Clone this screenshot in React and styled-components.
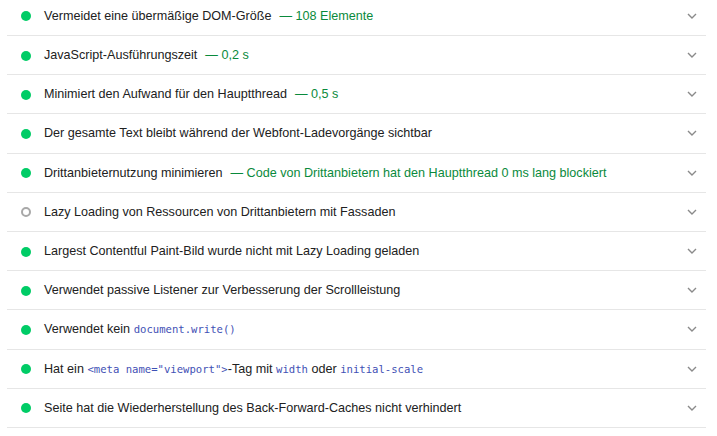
import styled, { createGlobalStyle } from "styled-components";

const GlobalStyle = createGlobalStyle`
  html, body {
    margin: 0;
    padding: 0;
    background: #fff;
    overflow: hidden;
  }
  body {
    font-family: "Liberation Sans", Arial, sans-serif;
    font-size: 12.6px;
    color: #212121;
  }
`;

const Page = styled.div`
  width: 717px;
  height: 436px;
  overflow: hidden;
  padding: 0 11px 0 7px;
  box-sizing: border-box;
`;

const List = styled.div`
  margin-top: -3.2px;
`;

const Row = styled.div`
  display: flex;
  align-items: center;
  height: 38.2px;
  border-bottom: 1px solid #e6e6e6;
  padding: 0 9px 0 14px;
`;

const Dot = styled.span`
  flex: none;
  width: 10px;
  height: 10px;
  border-radius: 50%;
  box-sizing: border-box;
  margin-top: 1px;
  background: ${(p) => (p.$info ? "transparent" : "#0c6")};
  border: ${(p) => (p.$info ? "2px solid #a8a8a8" : "none")};
`;

const Title = styled.div`
  flex: 1;
  margin-left: 13px;
  white-space: nowrap;
  line-height: 20px;
`;

const Display = styled.span`
  color: #0a8a3c;
  margin-left: 8px;
`;

const Code = styled.code`
  font-family: "DejaVu Sans Mono", "Liberation Mono", monospace;
  font-size: 10.6px;
  color: #3f51b5;
`;

const Chevron = () => (
  <svg width="10" height="6" viewBox="0 0 10 6" style={{ flex: "none" }}>
    <path d="M1 1 L5 5 L9 1" fill="none" stroke="#8a8a8a" strokeWidth="1.4" />
  </svg>
);

const audits = [
  { title: "Vermeidet eine übermäßige DOM-Größe", value: "108 Elemente" },
  { title: "JavaScript-Ausführungszeit", value: "0,2 s" },
  { title: "Minimiert den Aufwand für den Hauptthread", value: "0,5 s" },
  { title: "Der gesamte Text bleibt während der Webfont-Ladevorgänge sichtbar" },
  {
    title: "Drittanbieternutzung minimieren",
    value: "Code von Drittanbietern hat den Hauptthread 0 ms lang blockiert",
  },
  { title: "Lazy Loading von Ressourcen von Drittanbietern mit Fassaden", info: true },
  { title: "Largest Contentful Paint-Bild wurde nicht mit Lazy Loading geladen" },
  { title: "Verwendet passive Listener zur Verbesserung der Scrollleistung" },
  {
    title: (
      <>
        Verwendet kein <Code>document.write()</Code>
      </>
    ),
  },
  {
    title: (
      <>
        Hat ein <Code>&lt;meta name="viewport"&gt;</Code>-Tag mit <Code>width</Code> oder{" "}
        <Code>initial-scale</Code>
      </>
    ),
  },
  { title: "Seite hat die Wiederherstellung des Back-Forward-Caches nicht verhindert" },
];

export default function App() {
  return (
    <>
      <GlobalStyle />
      <Page>
        <List>
          {audits.map((a, i) => (
            <Row key={i}>
              <Dot $info={a.info} />
              <Title>
                {a.title}
                {a.value && <Display>— {a.value}</Display>}
              </Title>
              <Chevron />
            </Row>
          ))}
        </List>
      </Page>
    </>
  );
}
